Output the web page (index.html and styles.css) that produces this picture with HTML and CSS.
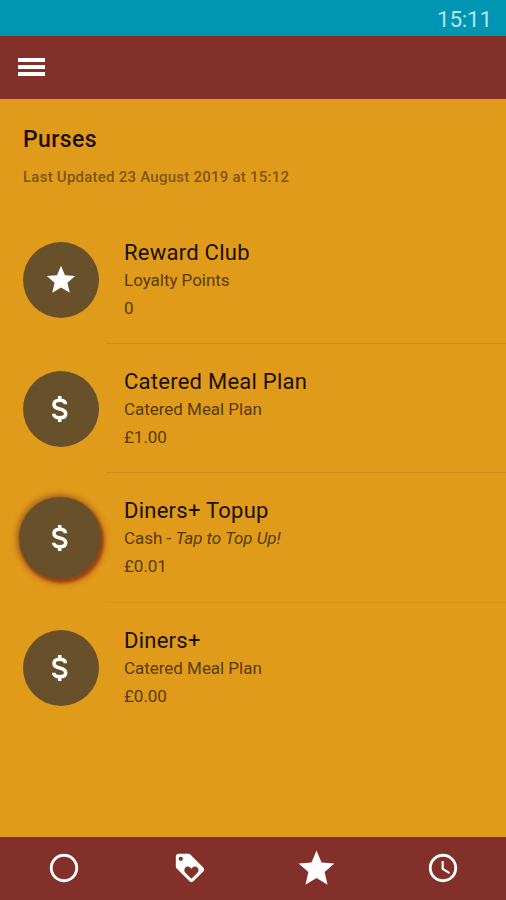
FILE: index.html
```html
<!DOCTYPE html>
<html lang="en">

<head>
    <meta charset="UTF-8">
    <meta name="viewport" content="width=device-width, initial-scale=1.0">
    <title>Purses</title>
    <link rel="stylesheet" href="styles.css">
</head>

<body>

    <div class="status-bar">15:11</div>

    <header class="toolbar">
        <button class="menu-btn" aria-label="Menu">
            <span></span>
            <span></span>
            <span></span>
        </button>
    </header>

    <!-- shared icon shapes -->
    <svg class="sprite">
        <symbol id="star" viewBox="0 0 24 24">
            <path d="M12 17.27L18.18 21l-1.64-7.03L22 9.24l-7.19-.61L12 2 9.19 8.63 2 9.24l5.46 4.73L5.82 21z" />
        </symbol>
        <symbol id="dollar" viewBox="0 0 24 24">
            <path d="M15.6 8.8C15.6 7.2 14.1 6.2 11.8 6.2S8 7.2 8 9c0 1.9 1.6 2.5 3.8 3s4 1.2 4 3.1c0 1.7-1.6 2.7-4 2.7s-4-1-4-2.7M11.8 6V3.4M11.8 18v2.6" />
        </symbol>
    </svg>

    <main class="content">
        <h1>Purses</h1>
        <p class="updated">Last Updated 23 August 2019 at 15:12</p>

        <div class="purses">
            <div class="purse">
                <div class="avatar"><svg class="star-icon"><use href="#star" /></svg></div>
                <div class="details">
                    <h2>Reward Club</h2>
                    <p>Loyalty Points</p>
                    <p>0</p>
                </div>
            </div>
            <div class="purse">
                <div class="avatar"><svg class="dollar-icon"><use href="#dollar" /></svg></div>
                <div class="details">
                    <h2>Catered Meal Plan</h2>
                    <p>Catered Meal Plan</p>
                    <p>£1.00</p>
                </div>
            </div>
            <div class="purse">
                <div class="avatar active"><svg class="dollar-icon"><use href="#dollar" /></svg></div>
                <div class="details">
                    <h2>Diners+ Topup</h2>
                    <p>Cash - <em>Tap to Top Up!</em></p>
                    <p>£0.01</p>
                </div>
            </div>
            <div class="purse">
                <div class="avatar"><svg class="dollar-icon"><use href="#dollar" /></svg></div>
                <div class="details">
                    <h2>Diners+</h2>
                    <p>Catered Meal Plan</p>
                    <p>£0.00</p>
                </div>
            </div>
        </div>
    </main>

    <nav class="bottom-nav">
        <a><svg viewBox="0 0 24 24"><path d="M12 2a10 10 0 1 0 0 20 10 10 0 0 0 0-20zm0 18a8 8 0 1 1 0-16 8 8 0 0 1 0 16z" /></svg></a>
        <a><svg viewBox="0 0 24 24"><path d="M21.41 11.58l-9-9C12.05 2.22 11.55 2 11 2H4c-1.1 0-2 .9-2 2v7c0 .55.22 1.05.59 1.42l9 9c.36.36.86.58 1.41.58s1.05-.22 1.41-.59l7-7c.37-.36.59-.86.59-1.41s-.23-1.06-.59-1.42zM5.5 7C4.67 7 4 6.33 4 5.5S4.67 4 5.5 4 7 4.67 7 5.5 6.33 7 5.5 7zm11.77 8.27L13 19.54l-4.27-4.27C8.28 14.81 8 14.19 8 13.5c0-1.38 1.12-2.5 2.5-2.5.69 0 1.32.28 1.77.74l.73.72.73-.73c.45-.45 1.08-.73 1.77-.73 1.38 0 2.5 1.12 2.5 2.5 0 .69-.28 1.32-.73 1.77z" /></svg></a>
        <a><svg class="selected"><use href="#star" /></svg></a>
        <a><svg viewBox="0 0 24 24"><path d="M12 2C6.47 2 2 6.5 2 12s4.47 10 10 10 10-4.5 10-10S17.5 2 12 2zm0 18a8 8 0 1 1 0-16 8 8 0 0 1 0 16zm.5-13H11v6l5.250 3.150.75-1.230-4.500-2.670z" /></svg></a>
    </nav>

</body>

</html>
```
FILE: styles.css
```css
* {
    box-sizing: border-box;
    margin: 0;
    padding: 0;
}

body {
    display: flex;
    flex-direction: column;
    height: 900px;
    background-color: #e19b1b;
    color: #1a1003;
    font-family: Roboto, sans-serif;
    overflow: hidden;
}

.sprite {
    display: none;
}

.status-bar {
    height: 36px;
    padding: 5px 14px 0 0;
    background-color: #0095b3;
    color: #b5e3ec;
    font-size: 22.5px;
    line-height: 29px;
    letter-spacing: -0.2px;
    text-align: right;
}

.toolbar {
    display: flex;
    align-items: center;
    height: 63px;
    padding: 0 0 2px 18px;
    background-color: #823029;
}

.menu-btn {
    display: flex;
    flex-direction: column;
    gap: 3px;
    border: none;
    background: none;
}

.menu-btn span {
    width: 27px;
    height: 4px;
    background-color: white;
}

.content {
    flex: 1;
    padding-left: 23px;
}

h1 {
    margin-top: 26px;
    font-size: 23px;
    font-weight: 500;
    line-height: 30px;
    letter-spacing: 0.4px;
}

.updated {
    margin-top: 12px;
    color: #7f550c;
    font-size: 15px;
    font-weight: 500;
    line-height: 20px;
    letter-spacing: 0.24px;
}

.purses {
    margin-top: 27.5px;
}

.purse {
    display: flex;
    height: 129.4px;
}

.avatar {
    display: flex;
    flex-shrink: 0;
    align-items: center;
    justify-content: center;
    width: 76px;
    height: 76px;
    margin-top: 27.5px;
    border-radius: 50%;
    background-color: #67502a;
}

.avatar svg {
    width: 36px;
    height: 36px;
    fill: white;
}

.avatar .star-icon {
    width: 34px;
    height: 34px;
}

.avatar .dollar-icon {
    margin: 0 2px 1px 0;
    fill: none;
    stroke: white;
    stroke-width: 2.4;
}

.avatar.active {
    box-shadow: -1px -1px 1px 3px #67502a, 1px 2px 3px 4px #9c4312, -2px -2px 6px 4px #a0641f, 1px 2px 8px 5px #cf7616;
}

.details {
    flex: 1;
    margin-left: 7px;
    padding: 24px 0 0 18px;
    border-bottom: 1px solid #cf8e19;
}

.purse:nth-child(3) .details {
    border-bottom-color: #d8941a;
}

.purse:last-child .details {
    border-bottom: none;
}

h2 {
    font-size: 22px;
    font-weight: 400;
    line-height: 28px;
    letter-spacing: 0.25px;
}

.details p {
    color: #583b09;
    font-size: 17px;
    line-height: 28px;
    letter-spacing: -0.03px;
}

.details h2 + p {
    margin-top: -0.8px;
}

.bottom-nav {
    display: flex;
    height: 63px;
    padding: 0 0 1px 1px;
    background-color: #823029;
}

.bottom-nav a {
    display: flex;
    flex: 1;
    align-items: center;
    justify-content: center;
}

.bottom-nav svg {
    width: 34px;
    height: 34px;
    fill: white;
}

.bottom-nav .selected {
    width: 43px;
    height: 43px;
}
```
